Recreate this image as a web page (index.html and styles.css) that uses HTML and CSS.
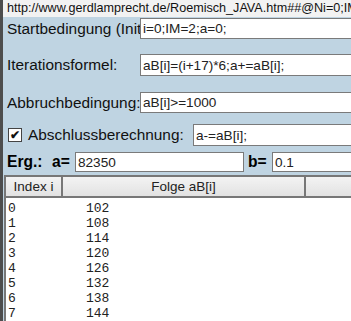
FILE: index.html
```html
<!DOCTYPE html>
<html>
    <head>
        <meta charset="UTF-8">
        <title>Roemisch JAVA</title>
        <link rel="stylesheet" href="styles.css">
    </head>
    <body>
        <div id="win">
            <div class="url">http://www.gerdlamprecht.de/Roemisch_JAVA.htm##@Ni=0;IM=2;a=0;</div>
            <div id="main">
                <div class="row r1">
                    <span class="lbl w1">Startbedingung (Initialisierung):</span>
                    <input type="text" class="in" value="i=0;IM=2;a=0;">
                </div>
                <div class="row r2">
                    <span class="lbl w1">Iterationsformel:</span>
                    <input type="text" class="in" value="aB[i]=(i+17)*6;a+=aB[i];">
                </div>
                <div class="row r3">
                    <span class="lbl w1">Abbruchbedingung:</span>
                    <input type="text" class="in" value="aB[i]>=1000">
                </div>
                <div class="row r4">
                    <span class="chk">&#10004;</span>
                    <span class="lbl w2">Abschlussberechnung:</span>
                    <input type="text" class="in" value="a-=aB[i];">
                </div>
                <div class="row r5">
                    <b class="erg">Erg.:</b>
                    <b class="eq">a=</b>
                    <input type="text" class="in ina" value="82350">
                    <b class="eq eqb">b=</b>
                    <input type="text" class="in" value="0.1">
                </div>
                <table class="tabl">
                    <tr>
                        <th class="c1">Index i</th>
                        <th class="c2">Folge aB[i]</th>
                        <th></th>
                    </tr>
                </table>
                <pre class="out">0         102
1         108
2         114
3         120
4         126
5         132
6         138
7         144</pre>
            </div>
        </div>
    </body>
</html>
```
FILE: styles.css
```css
body {
    margin: 0;
    width: 351px;
    height: 321px;
    overflow: hidden;
    font-family: "Liberation Sans", Arial, sans-serif;
}
#win {
    border-left: 3px solid #4d4d4d;
    height: 321px;
    background: #bfd4e2;
}
.url {
    background: #f2f2f2;
    height: 17px;
    font-size: 12.6px;
    line-height: 17px;
    padding-left: 4px;
    white-space: nowrap;
    overflow: hidden;
    color: #111;
}
#main {
    padding-left: 1px;
}
.row {
    display: flex;
    align-items: center;
    white-space: nowrap;
}
.lbl {
    font-size: 15.4px;
    color: #111;
    padding-left: 3px;
    overflow: hidden;
}
.w1 {
    width: 133px;
    flex: none;
}
.w2 {
    width: 165px;
    flex: none;
}
.in {
    flex: 1;
    min-width: 0;
    height: 100%;
    box-sizing: border-box;
    border: 1px solid #7a7a7a;
    background: white;
    font-family: "Liberation Sans", Arial, sans-serif;
    font-size: 13.6px;
    color: #222;
    padding: 0 2px;
    margin: 0 -4px 0 0;
}
.r1 {
    height: 21px;
    margin-top: 1px;
}
.r2 {
    height: 22px;
    margin-top: 15px;
}
.r3 {
    height: 21px;
    margin-top: 16px;
}
.r4 {
    height: 22px;
    margin-top: 11px;
}
.r5 {
    height: 20px;
    margin-top: 6px;
}
.chk {
    width: 12px;
    height: 12px;
    border: 1px solid #444;
    background: white;
    margin: 0 3px 0 4px;
    font-size: 12px;
    font-weight: bold;
    line-height: 12px;
    text-align: center;
    color: #111;
}
.erg {
    font-size: 15.6px;
    padding-left: 3px;
    width: 45px;
}
.eq {
    font-size: 15.6px;
    width: 23px;
}
.eqb {
    margin-left: 4px;
    width: 24px;
}
.ina {
    flex: none;
    width: 169px;
    margin-right: 0;
}
.tabl {
    border-collapse: collapse;
    margin-top: 3px;
    width: 351px;
    table-layout: fixed;
}
.tabl th {
    height: 19px;
    border: 2px solid #777;
    background: linear-gradient(#f3f3f3, #e2e2e2);
    font-weight: normal;
    font-size: 13.5px;
    color: #222;
    padding: 0;
}
.c1 {
    width: 55px;
}
.c2 {
    width: 241px;
}
.out {
    margin: 0;
    background: white;
    height: 130px;
    font-family: "Liberation Mono", "Courier New", monospace;
    font-size: 13px;
    line-height: 15px;
    padding: 3px 0 0 2px;
    color: #222;
    border-left: 2px solid #777;
}
```
